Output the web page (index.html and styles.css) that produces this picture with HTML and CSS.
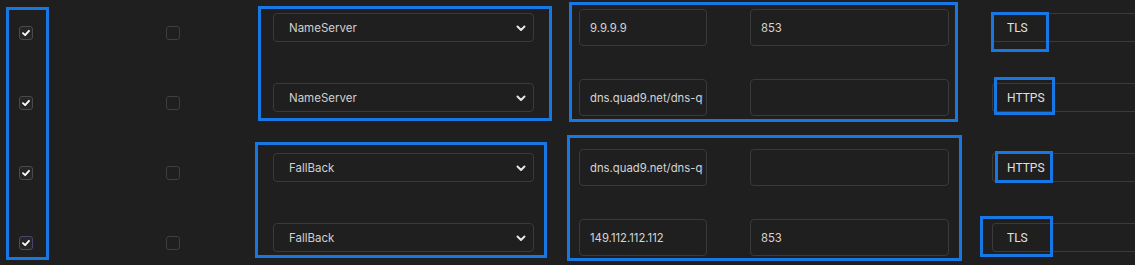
FILE: index.html
```html
<!DOCTYPE html>
<html lang="en">
<head>
    <meta charset="UTF-8">
    <meta name="viewport" content="width=device-width, initial-scale=1.0">
    <title>DNS servers</title>
    <link rel="stylesheet" href="styles.css">
</head>
<body>
    <div class="table">
        <!-- row 1 -->
        <div class="row">
            <span class="check checked"><svg viewBox="0 0 14 14"><path d="M3.5 7.2 L6 9.5 L10.5 4.5"/></svg></span>
            <span class="check empty"></span>
            <div class="select"><span>NameServer</span><svg viewBox="0 0 12 12"><path d="M2.5 4.5 L6 8 L9.5 4.5"/></svg></div>
            <input class="field host" type="text" value="9.9.9.9">
            <input class="field port" type="text" value="853">
            <div class="proto">TLS</div>
        </div>
        <!-- row 2 -->
        <div class="row">
            <span class="check checked"><svg viewBox="0 0 14 14"><path d="M3.5 7.2 L6 9.5 L10.5 4.5"/></svg></span>
            <span class="check empty"></span>
            <div class="select"><span>NameServer</span><svg viewBox="0 0 12 12"><path d="M2.5 4.5 L6 8 L9.5 4.5"/></svg></div>
            <input class="field host" type="text" value="dns.quad9.net/dns-query">
            <input class="field port" type="text" value="">
            <div class="proto">HTTPS</div>
        </div>
        <!-- row 3 -->
        <div class="row">
            <span class="check checked"><svg viewBox="0 0 14 14"><path d="M3.5 7.2 L6 9.5 L10.5 4.5"/></svg></span>
            <span class="check empty"></span>
            <div class="select"><span>FallBack</span><svg viewBox="0 0 12 12"><path d="M2.5 4.5 L6 8 L9.5 4.5"/></svg></div>
            <input class="field host" type="text" value="dns.quad9.net/dns-query">
            <input class="field port" type="text" value="">
            <div class="proto">HTTPS</div>
        </div>
        <!-- row 4 -->
        <div class="row">
            <span class="check checked focus"><svg viewBox="0 0 14 14"><path d="M3.5 7.2 L6 9.5 L10.5 4.5"/></svg></span>
            <span class="check empty"></span>
            <div class="select"><span>FallBack</span><svg viewBox="0 0 12 12"><path d="M2.5 4.5 L6 8 L9.5 4.5"/></svg></div>
            <input class="field host" type="text" value="149.112.112.112">
            <input class="field port" type="text" value="853">
            <div class="proto">TLS</div>
        </div>

        <!-- annotation frames -->
        <div class="mark mark-enable"></div>
        <div class="mark mark-type-a"></div>
        <div class="mark mark-type-b"></div>
        <div class="mark mark-addr-a"></div>
        <div class="mark mark-addr-b"></div>
        <div class="mark mark-p1"></div>
        <div class="mark mark-p2"></div>
        <div class="mark mark-p3"></div>
        <div class="mark mark-p4"></div>
    </div>
</body>
</html>
```

FILE: styles.css
```css
html, body {
    margin: 0;
    overflow: hidden;
    background: #1f1f1f;
}
body {
    font-family: Inter, "Open Sans", sans-serif;
    color: #d8d8d8;
}
.table {
    position: relative;
    width: 1135px;
    height: 265px;
    padding-top: 7px;
    box-sizing: border-box;
    display: flex;
    flex-direction: column;
    gap: 29px;
}
.row {
    height: 41px;
    display: flex;
    align-items: center;
}
.row > * {
    flex-shrink: 0;
}
.check {
    width: 14px;
    height: 14px;
    box-sizing: border-box;
    border-radius: 3px;
    margin-top: 11px;
    display: flex;
    align-items: center;
    justify-content: center;
}
.check.checked {
    margin-left: 19px;
    border: 1px solid #4a4a4a;
    background: #262626;
}
.check.focus {
    border-color: #4e4470;
}
.check svg {
    width: 14px;
    height: 14px;
    fill: none;
    stroke: #ffffff;
    stroke-width: 2.2;
    stroke-linecap: round;
    stroke-linejoin: round;
}
.check.empty {
    margin-left: 133px;
    border: 1px solid #3e3e3e;
}
.select {
    margin-left: 93px;
    width: 261px;
    height: 29px;
    box-sizing: border-box;
    border: 1px solid #3a3a3a;
    border-radius: 4px;
    padding: 0 6px 0 15px;
    display: flex;
    align-items: center;
    justify-content: space-between;
    font-size: 11.5px;
    color: #cfcfcf;
}
.select svg {
    width: 12px;
    height: 12px;
    fill: none;
    stroke: #e6e6e6;
    stroke-width: 2;
    stroke-linecap: round;
    stroke-linejoin: round;
}
.field {
    height: 37px;
    box-sizing: border-box;
    background: #1f1f1f;
    border: 1px solid #3a3a3a;
    border-radius: 4px;
    padding: 0 3px 0 10px;
    font-family: Inter, "Open Sans", sans-serif;
    font-size: 11.3px;
    color: #d4d4d4;
    outline: none;
}
.host {
    margin-left: 45px;
    width: 128px;
}
.port {
    margin-left: 43px;
    width: 199px;
}
.proto {
    margin-left: 43px;
    width: 143px;
    height: 29px;
    box-sizing: border-box;
    border: 1px solid #3a3a3a;
    border-right: none;
    border-radius: 4px 0 0 4px;
    padding-left: 14px;
    display: flex;
    align-items: center;
    font-family: Roboto, "Liberation Sans", sans-serif;
    font-size: 12px;
    color: #e0e0e0;
}
.mark {
    position: absolute;
    border: 3px solid #1677e5;
    box-sizing: border-box;
}
.mark-enable { left: 6px; top: 7px; width: 43px; height: 253px; }
.mark-type-a { left: 258px; top: 6px; width: 294px; height: 115px; }
.mark-type-b { left: 255px; top: 142px; width: 292px; height: 116px; }
.mark-addr-a { left: 569px; top: 2px; width: 389px; height: 120px; }
.mark-addr-b { left: 567px; top: 135px; width: 395px; height: 126px; }
.mark-p1 { left: 991px; top: 12px; width: 58px; height: 40px; }
.mark-p2 { left: 994px; top: 77px; width: 61px; height: 38px; }
.mark-p3 { left: 995px; top: 151px; width: 58px; height: 32px; }
.mark-p4 { left: 980px; top: 216px; width: 73px; height: 41px; }
```
